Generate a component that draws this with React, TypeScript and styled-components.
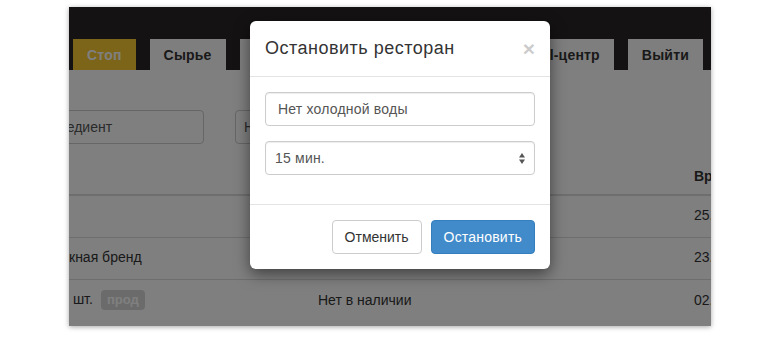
import React from 'react';
import styled, { createGlobalStyle } from 'styled-components';

const GlobalStyle = createGlobalStyle`
  html, body {
    margin: 0;
    padding: 0;
    background: #fff;
  }
  body {
    font-family: "Liberation Sans", Arial, sans-serif;
    font-size: 14px;
    color: #333;
  }
`;

const Stage = styled.div`
  width: 780px;
  height: 337px;
  box-sizing: border-box;
  padding: 7px 0 0 69px;
`;

const Screen = styled.div`
  position: relative;
  width: 642px;
  height: 319px;
  overflow: hidden;
  background: #fff;
  box-shadow: 0 1px 5px rgba(0, 0, 0, 0.35);
`;

const Navbar = styled.div`
  height: 63px;
  background: #282426;
  display: flex;
  align-items: flex-end;
  justify-content: space-between;
  padding: 0 8px 0 4px;
`;

const TabGroup = styled.div`
  display: flex;
  gap: 14px;
`;

const Tab = styled.div<{ $accent?: boolean }>`
  height: 31px;
  padding: 0 14px;
  display: flex;
  align-items: center;
  font-weight: bold;
  font-size: 14px;
  letter-spacing: 0.2px;
  background: ${({ $accent }) => ($accent ? '#f9c930' : '#fcfcfc')};
  color: ${({ $accent }) => ($accent ? '#fff' : '#333')};
`;

const Content = styled.div`
  padding-top: 40px;
`;

const Filters = styled.div`
  display: flex;
  gap: 31px;
  margin-left: -45px;
`;

const FilterInput = styled.div<{ $width: number; $pad: number }>`
  box-sizing: border-box;
  width: ${({ $width }) => $width}px;
  height: 34px;
  padding: 0 ${({ $pad }) => $pad}px;
  border: 1px solid #ccc;
  border-radius: 4px;
  display: flex;
  align-items: center;
  color: #555;
  font-size: 14px;
`;

const Table = styled.table`
  margin-top: 14px;
  margin-left: -8px;
  width: 825px;
  border-collapse: collapse;
  table-layout: fixed;
`;

const Th = styled.th<{ $width: number }>`
  width: ${({ $width }) => $width}px;
  padding: 8px;
  line-height: 20px;
  text-align: left;
  font-weight: bold;
  color: #333;
  border-bottom: 2px solid #ddd;
  white-space: nowrap;
`;

const Td = styled.td`
  padding: 9px 8px 12px;
  line-height: 20px;
  border-top: 1px solid #ddd;
  color: #333;
  white-space: nowrap;
`;

const Badge = styled.span`
  display: inline-block;
  margin-left: 8px;
  padding: 0 6px;
  height: 20px;
  line-height: 20px;
  border-radius: 4px;
  background: #d6d6d6;
  color: #fff;
  font-weight: bold;
  font-size: 13px;
  vertical-align: middle;
`;

const Backdrop = styled.div`
  position: absolute;
  inset: 0;
  background: rgba(0, 0, 0, 0.5);
  padding: 14px 0 0 181px;
`;

const Modal = styled.div`
  width: 300px;
  background: #fff;
  border-radius: 6px;
  box-shadow: 0 5px 15px rgba(0, 0, 0, 0.5);
`;

const ModalHeader = styled.div`
  display: flex;
  align-items: center;
  justify-content: space-between;
  height: 55px;
  padding: 0 15px;
  border-bottom: 1px solid #e5e5e5;
`;

const ModalTitle = styled.h4`
  margin: 0;
  font-size: 18px;
  font-weight: normal;
  letter-spacing: 0.5px;
  line-height: 1.42857;
  color: #333;
`;

const Close = styled.span`
  font-size: 21px;
  font-weight: bold;
  line-height: 1;
  color: #000;
  opacity: 0.2;
`;

const ModalBody = styled.div`
  padding: 15px 15px 14px;
`;

const FormGroup = styled.div`
  margin-bottom: 15px;
`;

const Field = styled.div<{ $pad: number }>`
  box-sizing: border-box;
  height: 34px;
  padding: 0 9px 0 ${({ $pad }) => $pad}px;
  border: 1px solid #ccc;
  border-radius: 4px;
  box-shadow: inset 0 1px 1px rgba(0, 0, 0, 0.075);
  display: flex;
  align-items: center;
  justify-content: space-between;
  color: #555;
  font-size: 14px;
  letter-spacing: 0.2px;
`;

const ModalFooter = styled.div`
  display: flex;
  justify-content: flex-end;
  gap: 9px;
  padding: 15px;
  border-top: 1px solid #e5e5e5;
`;

const Button = styled.button<{ $primary?: boolean }>`
  height: 34px;
  padding: 0 12px;
  border-radius: 4px;
  font-family: inherit;
  font-size: 14px;
  letter-spacing: ${({ $primary }) => ($primary ? '0.2px' : '0')};
  border: 1px solid ${({ $primary }) => ($primary ? '#357ebd' : '#ccc')};
  background: ${({ $primary }) => ($primary ? '#428bca' : '#fff')};
  color: ${({ $primary }) => ($primary ? '#fff' : '#333')};
`;

const SelectArrows = () => (
  <svg width="6" height="11" viewBox="0 0 6 11">
    <path d="M3 0 L6 4.5 L0 4.5 Z" fill="#555" />
    <path d="M0 6.5 L6 6.5 L3 11 Z" fill="#555" />
  </svg>
);

const App = () => (
  <>
    <GlobalStyle />
    <Stage>
      <Screen>
        <Navbar>
          <TabGroup>
            <Tab $accent>Стоп</Tab>
            <Tab>Сырье</Tab>
            <Tab>Рестораны</Tab>
          </TabGroup>
          <TabGroup>
            <Tab>Call-центр</Tab>
            <Tab>Выйти</Tab>
          </TabGroup>
        </Navbar>
        <Content>
          <Filters>
            <FilterInput $width={180} $pad={11}>Ингредиент</FilterInput>
            <FilterInput $width={220} $pad={8}>Название</FilterInput>
          </Filters>
          <Table>
            <thead>
              <tr>
                <Th $width={233} />
                <Th $width={360}>Причина</Th>
                <Th $width={184}>Время</Th>
              </tr>
            </thead>
            <tbody>
              <tr>
                <Td />
                <Td />
                <Td>25.04 12:30</Td>
              </tr>
              <tr>
                <Td>кная бренд</Td>
                <Td />
                <Td>23.04 18:10</Td>
              </tr>
              <tr>
                <Td>
                  &nbsp;шт.<Badge>прод</Badge>
                </Td>
                <Td>Нет в наличии</Td>
                <Td>02.04 09:45</Td>
              </tr>
            </tbody>
          </Table>
        </Content>
        <Backdrop>
          <Modal>
            <ModalHeader>
              <ModalTitle>Остановить ресторан</ModalTitle>
              <Close>×</Close>
            </ModalHeader>
            <ModalBody>
              <FormGroup>
                <Field $pad={12}>Нет холодной воды</Field>
              </FormGroup>
              <FormGroup>
                <Field $pad={9}>
                  15 мин.
                  <SelectArrows />
                </Field>
              </FormGroup>
            </ModalBody>
            <ModalFooter>
              <Button>Отменить</Button>
              <Button $primary>Остановить</Button>
            </ModalFooter>
          </Modal>
        </Backdrop>
      </Screen>
    </Stage>
  </>
);

export default App;
